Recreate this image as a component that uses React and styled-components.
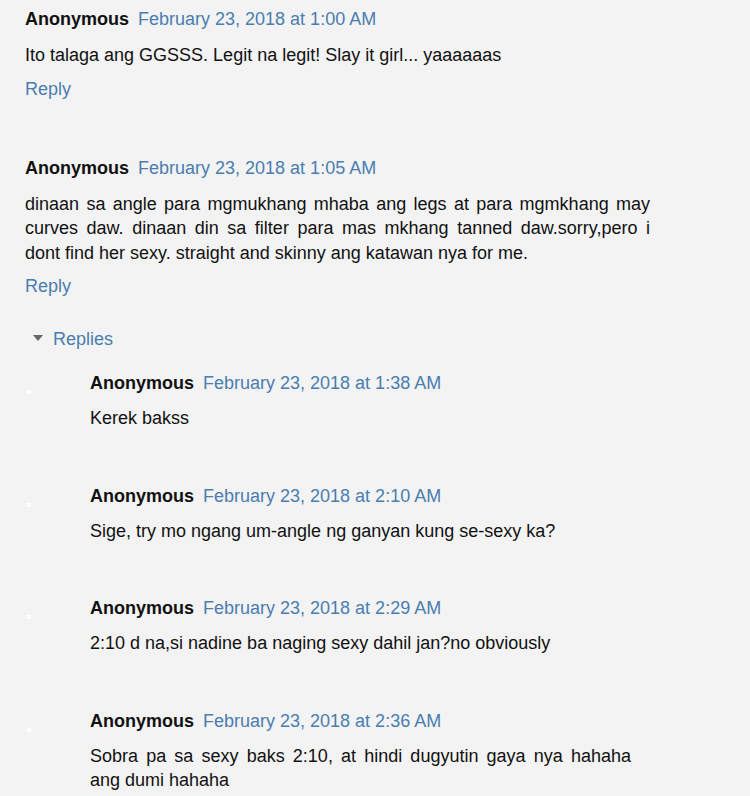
import React from 'react';
import styled, { createGlobalStyle } from 'styled-components';

const Global = createGlobalStyle`
  html, body {
    margin: 0;
    padding: 0;
    background: #f3f3f3;
  }
  body {
    font-family: "Liberation Sans", Arial, sans-serif;
    font-size: 18px;
    color: #111;
  }
`;

const comments = [
  {
    date: 'February 23, 2018 at 1:00 AM',
    body: 'Ito talaga ang GGSSS. Legit na legit! Slay it girl... yaaaaaas',
  },
  {
    date: 'February 23, 2018 at 1:05 AM',
    body: 'dinaan sa angle para mgmukhang mhaba ang legs at para mgmkhang may curves daw. dinaan din sa filter para mas mkhang tanned daw.sorry,pero i dont find her sexy. straight and skinny ang katawan nya for me.',
    replies: [
      { date: 'February 23, 2018 at 1:38 AM', body: 'Kerek bakss' },
      { date: 'February 23, 2018 at 2:10 AM', body: 'Sige, try mo ngang um-angle ng ganyan kung se-sexy ka?' },
      { date: 'February 23, 2018 at 2:29 AM', body: '2:10 d na,si nadine ba naging sexy dahil jan?no obviously' },
      { date: 'February 23, 2018 at 2:36 AM', body: 'Sobra pa sa sexy baks 2:10, at hindi dugyutin gaya nya hahaha ang dumi hahaha' },
    ],
  },
];

export default function App() {
  return (
    <>
      <Global />
      <Thread>
        {comments.map((c, i) => (
          <Comment key={i}>
            <Header>
              <Author>Anonymous</Author>
              <DateLink>{c.date}</DateLink>
            </Header>
            <Body>{c.body}</Body>
            <ReplyLink>Reply</ReplyLink>
            {c.replies && (
              <Replies>
                <Toggle>
                  <Caret />
                  <span>Replies</span>
                </Toggle>
                {c.replies.map((r, j) => (
                  <Nested key={j}>
                    <Avatar />
                    <NestedContent>
                      <Header>
                        <Author>Anonymous</Author>
                        <DateLink>{r.date}</DateLink>
                      </Header>
                      <Body $nested>{r.body}</Body>
                    </NestedContent>
                  </Nested>
                ))}
              </Replies>
            )}
          </Comment>
        ))}
      </Thread>
    </>
  );
}

const Thread = styled.div`
  width: 625px;
  padding: 7px 0 0 25px;
  display: flex;
  flex-direction: column;
  gap: 55px;
`;

const Comment = styled.div`
  display: flex;
  flex-direction: column;
`;

const Header = styled.div`
  display: flex;
  align-items: baseline;
  gap: 9px;
  height: 24px;
  line-height: 24px;
  white-space: nowrap;
`;

const Author = styled.span`
  font-weight: bold;
  color: #111;
`;

const DateLink = styled.span`
  color: #4a7db0;
`;

const Body = styled.div`
  margin-top: ${p => (p.$nested ? '11px' : '12px')};
  line-height: 24.5px;
  text-align: justify;
`;

const ReplyLink = styled.span`
  margin-top: 9px;
  line-height: 24px;
  color: #4a7db0;
  align-self: flex-start;
`;

const Replies = styled.div`
  margin-top: 29px;
  display: flex;
  flex-direction: column;
`;

const Toggle = styled.div`
  display: flex;
  align-items: center;
  gap: 10px;
  margin-left: 8px;
  line-height: 24px;
  color: #4a7db0;
`;

const Caret = styled.span`
  width: 0;
  height: 0;
  border-left: 5px solid transparent;
  border-right: 5px solid transparent;
  border-top: 6px solid #666;
  margin-top: -3px;
`;

const Nested = styled.div`
  display: flex;
  margin-top: 20px;
  & + & {
    margin-top: 53px;
  }
`;

const Avatar = styled.div`
  width: 4px;
  height: 4px;
  background: #fff;
  margin: 19px 59px 0 2px;
  flex-shrink: 0;
`;

const NestedContent = styled.div`
  width: 541px;
  display: flex;
  flex-direction: column;
`;
